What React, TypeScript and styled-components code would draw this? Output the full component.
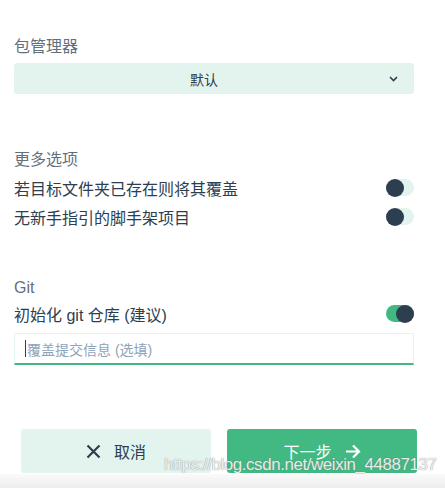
import React from "react";
import styled, { createGlobalStyle } from "styled-components";

const Global = createGlobalStyle`
  html, body { margin: 0; padding: 0; background: #fff; }
  body { font-family: "Liberation Sans", "Noto Sans CJK SC", sans-serif; color: #2c3e50; }
  * { box-sizing: border-box; }
`;

const Page = styled.div`
  position: relative;
  width: 445px;
  height: 488px;
  overflow: hidden;
  display: flex;
  flex-direction: column;
`;

const Content = styled.div`
  padding: 36px 31px 0 14px;
  display: flex;
  flex-direction: column;
`;

const Heading = styled.div<{ $top?: number }>`
  margin-top: ${(p) => p.$top ?? 0}px;
  font-size: 16px;
  line-height: 22px;
  height: 22px;
  color: #62707e;
`;

const Select = styled.div`
  margin-top: 5px;
  height: 31px;
  background: #e3f4ee;
  border-radius: 3px;
  display: flex;
  align-items: center;
  padding-right: 20px;
  position: relative;
`;

const SelectValue = styled.span`
  flex: 1;
  text-align: center;
  font-size: 14px;
  color: #2c3e50;
`;

const Chevron = styled.svg`
  position: absolute;
  right: 16px;
  top: 13px;
`;

const Row = styled.div`
  height: 29px;
  display: flex;
  align-items: center;
  justify-content: space-between;
  font-size: 16px;
  color: #2c3e50;
`;

const Rows = styled.div<{ $top?: number }>`
  margin-top: ${(p) => p.$top ?? 2}px;
  display: flex;
  flex-direction: column;
`;

const Track = styled.div<{ $on?: boolean }>`
  width: 28px;
  height: 17px;
  border-radius: 9px;
  background: ${(p) => (p.$on ? "#42b983" : "#e3f4ee")};
  display: flex;
  justify-content: ${(p) => (p.$on ? "flex-end" : "flex-start")};
  align-items: center;
`;

const Knob = styled.div`
  width: 18px;
  height: 18px;
  border-radius: 50%;
  background: #2c3e50;
`;

const InputBox = styled.div`
  margin-top: 5px;
  height: 32px;
  border: 1px solid #e3f4ee;
  border-bottom: 2px solid #42b983;
  border-radius: 2px 2px 0 0;
  display: flex;
  align-items: center;
  padding-left: 10px;
`;

const Caret = styled.span`
  width: 1px;
  height: 17px;
  background: #2c3e50;
  margin-right: 1px;
`;

const Placeholder = styled.span`
  font-size: 14px;
  color: #8ea3b8;
`;

const Actions = styled.div`
  margin-top: 64px;
  padding: 0 28px 0 21px;
  display: flex;
  gap: 16px;
`;

const Button = styled.div<{ $primary?: boolean }>`
  flex: 1;
  height: 44px;
  border-radius: 3px;
  display: flex;
  align-items: center;
  justify-content: center;
  gap: 13px;
  font-size: 16px;
  background: ${(p) => (p.$primary ? "#42b983" : "#e3f4ee")};
  color: ${(p) => (p.$primary ? "#fff" : "#2c3e50")};
`;

const Footer = styled.div`
  margin-top: auto;
  height: 14px;
  background: linear-gradient(#fafafa, #ededed);
`;

const Watermark = styled.div`
  position: absolute;
  left: 164px;
  top: 455px;
  font-family: "Liberation Sans", sans-serif;
  font-size: 17px;
  color: rgba(255, 255, 255, 0.85);
  text-shadow: 0 0 1px rgba(120, 120, 120, 0.6), 0 0 1px rgba(120, 120, 120, 0.6);
  letter-spacing: -0.45px;
  white-space: nowrap;
`;

const Toggle = ({ on }: { on?: boolean }) => (
  <Track $on={on}>
    <Knob />
  </Track>
);

export default function App() {
  return (
    <Page>
      <Global />
      <Content>
        <Heading>包管理器</Heading>
        <Select>
          <SelectValue>默认</SelectValue>
          <Chevron width="9" height="6" viewBox="0 0 9 6">
            <polyline points="1,1 4.5,4.5 8,1" fill="none" stroke="#2c3e50" strokeWidth="1.6" />
          </Chevron>
        </Select>

        <Heading $top={55}>更多选项</Heading>
        <Rows>
          <Row>
            <span>若目标文件夹已存在则将其覆盖</span>
            <Toggle />
          </Row>
          <Row>
            <span>无新手指引的脚手架项目</span>
            <Toggle />
          </Row>
        </Rows>

        <Heading $top={46}>Git</Heading>
        <Rows $top={0}>
          <Row>
            <span>初始化 git 仓库 (建议)</span>
            <Toggle on />
          </Row>
        </Rows>
        <InputBox>
          <Caret />
          <Placeholder>覆盖提交信息 (选填)</Placeholder>
        </InputBox>
      </Content>
      <Actions>
        <Button>
          <svg width="15" height="15" viewBox="0 0 15 15">
            <path d="M1.5 1.5 L13.5 13.5 M13.5 1.5 L1.5 13.5" stroke="#2c3e50" strokeWidth="2.2" fill="none" />
          </svg>
          <span>取消</span>
        </Button>
        <Button $primary>
          <span>下一步</span>
          <svg width="16" height="15" viewBox="0 0 16 15">
            <path d="M1 7.5 H14 M8 1.5 L14 7.5 L8 13.5" stroke="#fff" strokeWidth="2.2" fill="none" />
          </svg>
        </Button>
      </Actions>
      <Footer />
      <Watermark>https://blog.csdn.net/weixin_44887137</Watermark>
    </Page>
  );
}
